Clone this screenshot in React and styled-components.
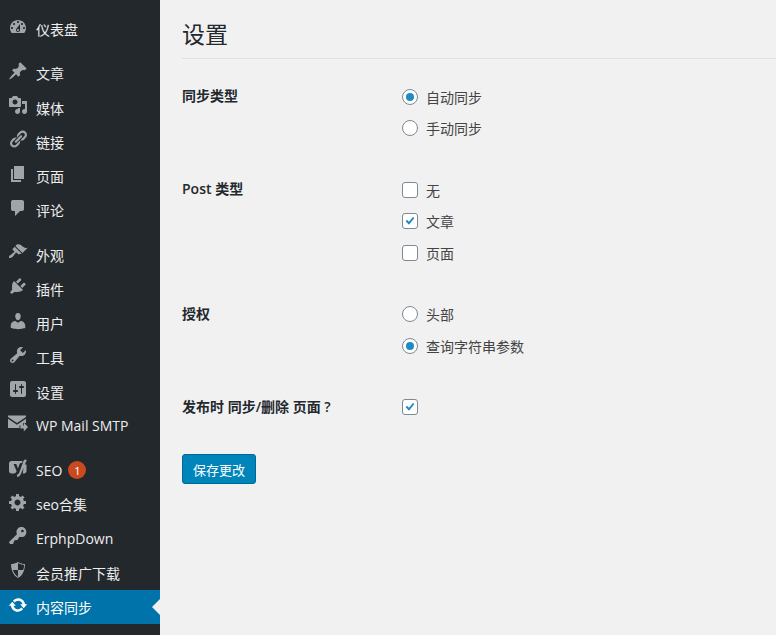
import styled, { createGlobalStyle } from "styled-components";

const FONT = `"Open Sans", "Noto Sans CJK SC", sans-serif`;

const GlobalStyle = createGlobalStyle`
	html, body {
		margin: 0;
		height: 100%;
		overflow: hidden;
		background: #f1f1f1;
		font-family: ${FONT};
	}
	#root {
		height: 100%;
	}
`;

const Page = styled.div`
	display: flex;
	height: 635px;
	overflow: hidden;
`;

const Sidebar = styled.nav`
	flex: 0 0 160px;
	padding-top: 12px;
	background: #23282d;
	box-sizing: border-box;
	overflow: hidden;
`;

const MenuGroup = styled.ul`
	margin: 0 0 10px;
	padding: 0;
	list-style: none;
`;

const MenuItem = styled.li`
	position: relative;
	display: flex;
	align-items: center;
	height: 34.25px;
	padding-left: 8px;
	color: ${(p) => (p.$active ? "#fff" : "#eee")};
	background: ${(p) => (p.$active ? "#0073aa" : "transparent")};
	font-size: 14px;
	white-space: nowrap;

	${(p) =>
		p.$active &&
		`&::after {
			content: "";
			position: absolute;
			right: 0;
			top: 50%;
			margin-top: -8px;
			border: 8px solid transparent;
			border-right-color: #f1f1f1;
			border-left-width: 0;
		}`}
`;

const MenuIcon = styled.svg`
	flex: 0 0 20px;
	width: 20px;
	height: 20px;
	margin-right: 8px;
	margin-top: -5px;
	fill: ${(p) => (p.$active ? "#fff" : "#a0a5aa")};
`;

const Badge = styled.span`
	display: inline-flex;
	align-items: center;
	justify-content: center;
	width: 18px;
	height: 18px;
	margin-left: 6px;
	border-radius: 50%;
	background: #ca4a1f;
	color: #fff;
	font-size: 11px;
`;

const Main = styled.main`
	flex: 1;
	min-width: 0;
	padding: 0 0 0 22px;
	color: #444;
`;

const Title = styled.h1`
	margin: 0 0 22px;
	height: 58px;
	border-bottom: 1px solid #e1e1e1;
	color: #23282d;
	font-size: 23px;
	font-weight: 400;
	line-height: 68px;
`;

const SettingRow = styled.div`
	display: grid;
	grid-template-columns: 220px 1fr;
	margin-bottom: ${(p) => p.$gap || 0}px;
`;

const SettingLabel = styled.div`
	color: #23282d;
	font-size: 14px;
	font-weight: 600;
	line-height: 32px;
	margin-top: -1px;
`;

const Options = styled.div`
	display: flex;
	flex-direction: column;
`;

const Option = styled.label`
	display: flex;
	align-items: center;
	height: 31.5px;
	font-size: 14px;
	color: #444;
`;

const Radio = styled.input.attrs({ type: "radio" })`
	appearance: none;
	box-sizing: border-box;
	display: grid;
	place-items: center;
	width: 16px;
	height: 16px;
	margin: 0 8px 0 0;
	border: 1px solid #7e8993;
	border-radius: 50%;
	background: #fff;

	&:checked::before {
		content: "";
		width: 8px;
		height: 8px;
		border-radius: 50%;
		background: #1e8cbe;
	}
`;

const Box = styled.input.attrs({ type: "checkbox" })`
	appearance: none;
	box-sizing: border-box;
	width: 16px;
	height: 16px;
	margin: 0 8px 0 0;
	border: 1px solid #7e8993;
	border-radius: 3px;
	background-color: #fff;
	background-position: center;
	background-repeat: no-repeat;

	&:checked {
		background-image: url("data:image/svg+xml,%3Csvg xmlns='http://www.w3.org/2000/svg' viewBox='0 0 16 16'%3E%3Cpath d='M3 8.2l1.6-1.6 2.2 2.2L11.4 3.4 13 4.7 6.9 12.4z' fill='%231e8cbe'/%3E%3C/svg%3E");
	}
`;

const SaveButton = styled.button`
	display: block;
	width: 74px;
	height: 30px;
	margin-top: 31px;
	padding: 0;
	border: 1px solid #006799;
	border-radius: 3px;
	background: #0085ba;
	color: #fff;
	font-family: ${FONT};
	font-size: 13px;
`;

const icons = {
	dashboard:
		"M3.76 16h12.48c1.1-1.37 1.76-3.11 1.76-5 0-4.42-3.58-8-8-8s-8 3.58-8 8c0 1.89.66 3.63 1.76 5zM10 4c.55 0 1 .45 1 1s-.45 1-1 1-1-.45-1-1 .45-1 1-1zM6 6c.55 0 1 .45 1 1s-.45 1-1 1-1-.45-1-1 .45-1 1-1zm8 0c.55 0 1 .45 1 1s-.45 1-1 1-1-.45-1-1 .45-1 1-1zm-5.37 5.55L12 7v6c0 1.1-.9 2-2 2s-2-.9-2-2c0-.57.24-1.08.63-1.45zM4 10c.55 0 1 .45 1 1s-.45 1-1 1-1-.45-1-1 .45-1 1-1zm12 0c.55 0 1 .45 1 1s-.45 1-1 1-1-.45-1-1 .45-1 1-1zm-5 3c0-.55-.45-1-1-1s-1 .45-1 1 .45 1 1 1 1-.45 1-1z",
	post: "M10.44 3.02l1.82-1.82 6.36 6.35-1.83 1.82c-1.05-.68-2.48-.57-3.41.36l-.75.75c-.92.93-1.04 2.35-.35 3.41l-1.83 1.82-2.41-2.41-2.8 2.79c-.42.42-3.38 2.71-3.8 2.29s1.86-3.39 2.28-3.81l2.79-2.79L4.1 9.36l1.83-1.82c1.05.69 2.48.57 3.4-.36l.75-.75c.93-.92 1.05-2.35.36-3.41z",
	media:
		"M13 11V4c0-.55-.45-1-1-1h-1.67L9 1H5L3.67 3H2c-.55 0-1 .45-1 1v7c0 .55.45 1 1 1h10c.55 0 1-.45 1-1zM7 4.5c1.38 0 2.5 1.12 2.5 2.5S8.38 9.5 7 9.5 4.5 8.38 4.5 7 5.62 4.5 7 4.5zM14 6h5v10.5c0 1.38-1.12 2.5-2.5 2.5S14 17.88 14 16.5s1.12-2.5 2.5-2.5c.17 0 .34.02.5.05V9h-3V6zm-4 8.05V13h2v3.5c0 1.38-1.12 2.5-2.5 2.5S7 17.88 7 16.5 8.12 14 9.5 14c.17 0 .34.02.5.05z",
	links:
		"M17.74 2.76c1.68 1.69 1.68 4.41 0 6.1l-1.53 1.52c-1.12 1.12-2.7 1.47-4.14 1.09l2.62-2.61.76-.77.76-.76c.84-.84.84-2.2 0-3.04-.84-.85-2.2-.85-3.04 0l-.77.76-3.38 3.38c-.37-1.44-.02-3.02 1.1-4.14l1.52-1.53c1.69-1.68 4.42-1.68 6.1 0zM8.59 13.43l5.34-5.34c.42-.42.42-1.1 0-1.52-.44-.43-1.13-.39-1.53 0l-5.33 5.34c-.42.42-.42 1.1 0 1.52.44.43 1.13.39 1.52 0zm-.76 2.29l4.14-4.15c.38 1.44.03 3.02-1.09 4.14l-1.52 1.53c-1.69 1.68-4.41 1.68-6.1 0-1.68-1.68-1.68-4.42 0-6.1l1.53-1.52c1.12-1.12 2.7-1.47 4.14-1.1l-4.14 4.15c-.85.84-.85 2.2 0 3.05.84.84 2.2.84 3.04 0z",
	page: "M6 15V2h10v13H6zm-1 1h8v2H3V5h2v11z",
	comments:
		"M5 2h9c1.1 0 2 .9 2 2v7c0 1.1-.9 2-2 2h-2l-5 5v-5H5c-1.1 0-2-.9-2-2V4c0-1.1.9-2 2-2z",
	appearance:
		"M14.48 11.06L7.41 3.99l1.5-1.5c.5-.56 2.3-.47 3.51.32 1.21.8 1.43 1.28 2.91 2.1 1.18.64 2.45 1.26 4.45.85zm-.71.71L6.7 4.7 4.93 6.47c-.39.39-.39 1.02 0 1.41l1.06 1.06c.39.39.39 1.03 0 1.42-.6.6-1.43 1.11-2.21 1.69-.35.26-.7.53-1.01.84C1.43 13.23.4 14.89 1.26 15.74s2.5-.18 3.85-1.49c.31-.31.58-.66.84-1.01.58-.78 1.09-1.61 1.69-2.21.39-.39 1.02-.39 1.41 0l1.06 1.06c.39.39 1.02.39 1.41 0z",
	plugins:
		"M13.11 4.36L9.87 7.6 8 5.73l3.24-3.24c.35-.34 1.05-.2 1.56.32.52.51.66 1.21.31 1.55zm-8 1.77l.91-1.12 9.01 9.01-1.19.84c-.71.71-2.63 1.16-3.82 1.16H6.14L4.9 17.26c-.59.59-1.54.59-2.12 0-.59-.58-.59-1.53 0-2.12l1.24-1.24v-3.88c0-1.13.4-3.19 1.09-3.89zm7.26 3.97l3.24-3.24c.34-.35 1.04-.21 1.55.31.52.51.66 1.21.31 1.55l-3.24 3.25z",
	users:
		"M10 9.25c-2.27 0-2.73-3.44-2.73-3.44C7 4.02 7.82 2 9.97 2c2.16 0 2.98 2.02 2.71 3.81 0 0-.41 3.44-2.68 3.44zm0 2.57L12.72 10c2.39 0 4.52 2.33 4.52 4.53v2.49s-3.65 1.13-7.24 1.13c-3.65 0-7.24-1.13-7.24-1.13v-2.49c0-2.25 1.94-4.48 4.47-4.48z",
	tools:
		"M16.68 9.77c-1.34 1.34-3.3 1.67-4.95.99l-5.41 6.52c-.99.99-2.59.99-3.58 0s-.99-2.59 0-3.57l6.52-5.42c-.68-1.65-.35-3.61.99-4.95 1.28-1.28 3.12-1.62 4.72-1.06l-2.89 2.89 2.82 2.82 2.86-2.87c.53 1.58.18 3.39-1.08 4.65zM3.81 16.21c.4.39 1.04.39 1.43 0 .4-.4.4-1.04 0-1.43-.39-.4-1.03-.4-1.43 0-.39.39-.39 1.03 0 1.43z",
	settings:
		"M18 16V4c0-1.1-.9-2-2-2H4c-1.1 0-2 .9-2 2v12c0 1.1.9 2 2 2h12c1.1 0 2-.9 2-2zM8 11h1c.55 0 1 .45 1 1s-.45 1-1 1H8v1.5c0 .28-.22.5-.5.5s-.5-.22-.5-.5V13H6c-.55 0-1-.45-1-1s.45-1 1-1h1V5.5c0-.28.22-.5.5-.5s.5.22.5.5V11zm5-2h-1c-.55 0-1-.45-1-1s.45-1 1-1h1V5.5c0-.28.22-.5.5-.5s.5.22.5.5V7h1c.55 0 1 .45 1 1s-.45 1-1 1h-1v5.5c0 .28-.22.5-.5.5s-.5-.22-.5-.5V9z",
	mail: "M0 4l9 6 9-6v-1.5h-18zM0 5.8v9.2h11.5v-2.5h3.5v-2.4l3-.1v-4.2l-9 6zM15.8 9.6l4.2 4.4-4.2 4.4v-2.9h-3.4v-3h3.4z",
	yoast:
		"M3.5 3h11.2l-.9 2.2c-1.2-.5-2 .2-2.4 1.2l-1.4 4-1.7-4.5H5.6l3 7.3c-.4 1.2-1.3 2-2.6 2.2H3.5C2.1 15.4 1 14.2 1 12.9V5.5C1 4.1 2.1 3 3.5 3zM16 1.8h2.9L13 15.8c-.8 2-2 3.2-3.9 3.2v-2.4c1-.2 1.7-.7 2.1-1.8zM15.9 6.5H18.5v6.4c0 1.4-1.1 2.5-2.5 2.5h-1.2z",
	generic:
		"M18 12h-2.18c-.17.7-.44 1.35-.81 1.93l1.54 1.54-2.1 2.1-1.54-1.54c-.58.36-1.23.63-1.91.79V19H8v-2.18c-.68-.16-1.33-.43-1.91-.79l-1.54 1.54-2.12-2.12 1.54-1.54c-.36-.58-.63-1.23-.79-1.91H1V9.03h2.17c.16-.7.44-1.35.8-1.94L2.43 5.55l2.1-2.1 1.54 1.54c.58-.37 1.24-.64 1.93-.81V2h3v2.18c.68.16 1.33.43 1.91.79l1.54-1.54 2.12 2.12-1.54 1.54c.36.59.64 1.24.8 1.94H18V12zm-8.5 1.5c1.66 0 3-1.34 3-3s-1.34-3-3-3-3 1.34-3 3 1.34 3 3 3z",
	key: "M16.95 2.58c1.96 1.95 1.96 5.12 0 7.07-1.51 1.51-3.75 1.84-5.59 1.01l-1.87 3.31-2.99.31L5 18H2l-1-2 7.95-7.69c-.92-1.87-.62-4.18.93-5.73 1.95-1.96 5.12-1.96 7.07 0zm-2.51 3.79c.74 0 1.33-.6 1.33-1.34 0-.73-.59-1.33-1.33-1.33-.73 0-1.33.6-1.33 1.33 0 .74.6 1.34 1.33 1.34z",
	shield:
		"M10 2s3 2 7 2c0 11-7 14-7 14S3 15 3 4c4 0 7-2 7-2zm0 8h5s1-1 1-5c0 0-5-1-6-2v7H5c1 4 5 7 5 7v-7z",
	update:
		"M10.2 3.28c3.53 0 6.43 2.61 6.92 6h2.08l-3.5 4-3.5-4h2.32c-.45-1.97-2.21-3.44-4.32-3.44-1.45 0-2.73.71-3.54 1.78L4.95 5.66C6.23 4.2 8.11 3.28 10.2 3.28zm-.4 13.44c-3.52 0-6.43-2.61-6.92-6H.8l3.5-4c1.17 1.33 2.33 2.67 3.5 4H5.48c.45 1.97 2.21 3.44 4.32 3.44 1.45 0 2.73-.71 3.54-1.78l1.71 1.95c-1.28 1.46-3.15 2.39-5.25 2.39z",
};

const menuGroups = [
	[{ icon: "dashboard", label: "仪表盘" }],
	[
		{ icon: "post", label: "文章" },
		{ icon: "media", label: "媒体" },
		{ icon: "links", label: "链接" },
		{ icon: "page", label: "页面" },
		{ icon: "comments", label: "评论" },
	],
	[
		{ icon: "appearance", label: "外观" },
		{ icon: "plugins", label: "插件" },
		{ icon: "users", label: "用户" },
		{ icon: "tools", label: "工具" },
		{ icon: "settings", label: "设置" },
		{ icon: "mail", label: "WP Mail SMTP" },
	],
	[
		{ icon: "yoast", label: "SEO", badge: 1 },
		{ icon: "generic", label: "seo合集" },
		{ icon: "key", label: "ErphpDown" },
		{ icon: "shield", label: "会员推广下载" },
		{ icon: "update", label: "内容同步", active: true },
	],
];

const App = () => {
	return (
		<>
			<GlobalStyle />
			<Page>
				<Sidebar>
					{menuGroups.map((group, i) => (
						<MenuGroup key={i}>
							{group.map((item) => (
								<MenuItem key={item.label} $active={item.active}>
									<MenuIcon viewBox="0 0 20 20" $active={item.active}>
										<path d={icons[item.icon]} />
									</MenuIcon>
									{item.label}
									{item.badge && <Badge>{item.badge}</Badge>}
								</MenuItem>
							))}
						</MenuGroup>
					))}
				</Sidebar>
				<Main>
					<Title>设置</Title>
					<SettingRow $gap={30}>
						<SettingLabel>同步类型</SettingLabel>
						<Options>
							<Option>
								<Radio name="sync" defaultChecked />
								自动同步
							</Option>
							<Option>
								<Radio name="sync" />
								手动同步
							</Option>
						</Options>
					</SettingRow>
					<SettingRow $gap={30}>
						<SettingLabel>Post 类型</SettingLabel>
						<Options>
							<Option>
								<Box />无
							</Option>
							<Option>
								<Box defaultChecked />
								文章
							</Option>
							<Option>
								<Box />
								页面
							</Option>
						</Options>
					</SettingRow>
					<SettingRow $gap={30}>
						<SettingLabel>授权</SettingLabel>
						<Options>
							<Option>
								<Radio name="auth" />
								头部
							</Option>
							<Option>
								<Radio name="auth" defaultChecked />
								查询字符串参数
							</Option>
						</Options>
					</SettingRow>
					<SettingRow>
						<SettingLabel>发布时 同步/删除 页面 ?</SettingLabel>
						<Options>
							<Option>
								<Box defaultChecked />
							</Option>
						</Options>
					</SettingRow>
					<SaveButton>保存更改</SaveButton>
				</Main>
			</Page>
		</>
	);
};

export default App;
